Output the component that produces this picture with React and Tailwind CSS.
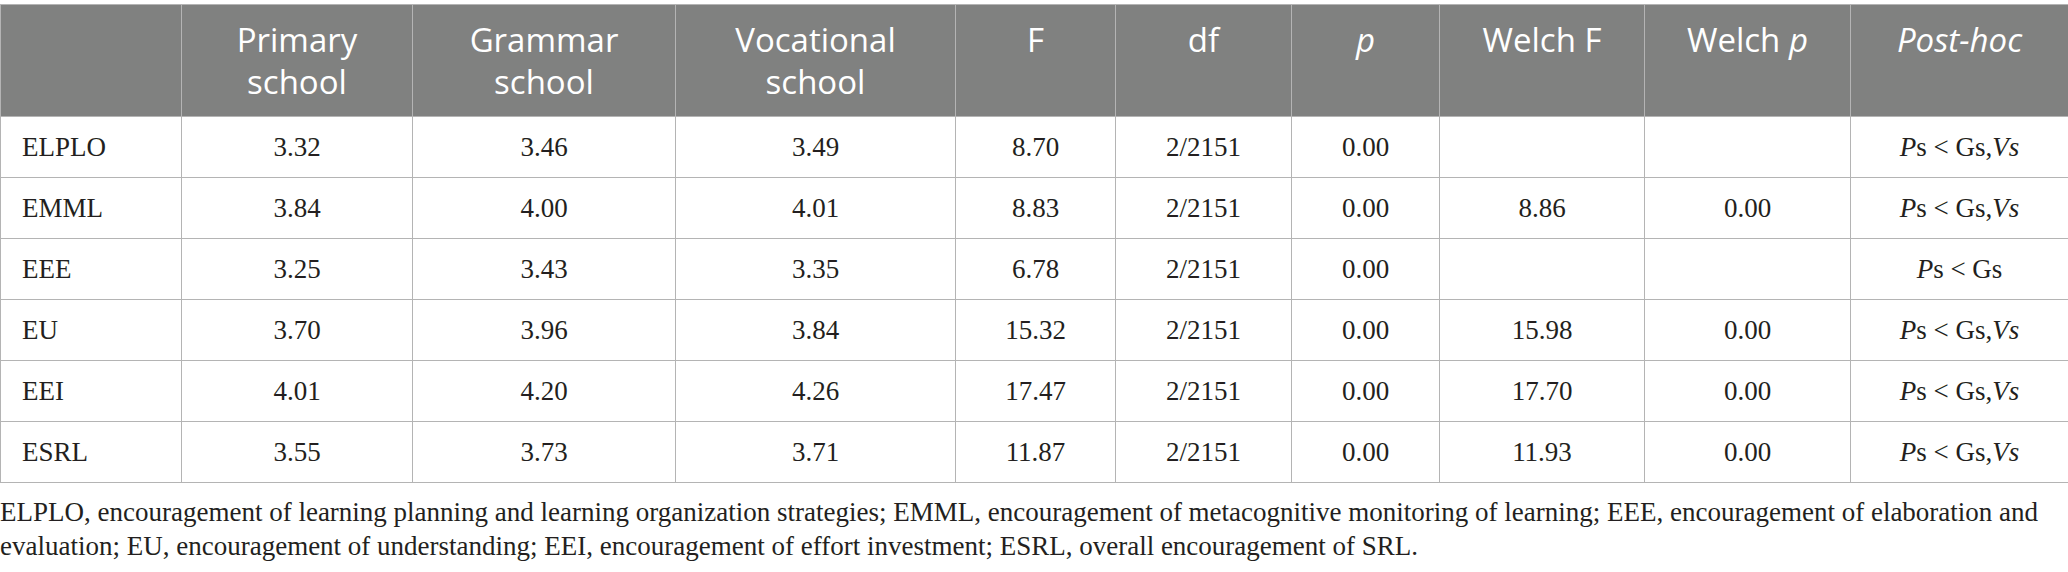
import React from 'react';

const rows = [
  ['ELPLO', '3.32', '3.46', '3.49', '8.70', '2/2151', '0.00', '', '', 'full'],
  ['EMML', '3.84', '4.00', '4.01', '8.83', '2/2151', '0.00', '8.86', '0.00', 'full'],
  ['EEE', '3.25', '3.43', '3.35', '6.78', '2/2151', '0.00', '', '', 'gs'],
  ['EU', '3.70', '3.96', '3.84', '15.32', '2/2151', '0.00', '15.98', '0.00', 'full'],
  ['EEI', '4.01', '4.20', '4.26', '17.47', '2/2151', '0.00', '17.70', '0.00', 'full'],
  ['ESRL', '3.55', '3.73', '3.71', '11.87', '2/2151', '0.00', '11.93', '0.00', 'full'],
];

const PostHoc = ({ kind }) =>
  kind === 'gs' ? (
    <span>
      <i>P</i>s &lt; Gs
    </span>
  ) : (
    <span>
      <i>P</i>s &lt; Gs,<i>Vs</i>
    </span>
  );

const th = 'border border-[#b4b4b4] align-top pt-[14px] text-center font-normal';
const td = 'border border-[#b4b4b4] text-center';

const App = () => {
  return (
    <div className="bg-white w-[2068px] h-[572px] pt-[4px] text-[#231f20]">
      <table className="w-[2068px] table-fixed border-collapse">
        <colgroup>
          <col className="w-[181px]" />
          <col className="w-[231px]" />
          <col className="w-[263px]" />
          <col className="w-[280px]" />
          <col className="w-[160px]" />
          <col className="w-[176px]" />
          <col className="w-[148px]" />
          <col className="w-[205px]" />
          <col className="w-[206px]" />
          <col className="w-[218px]" />
        </colgroup>
        <thead>
          <tr className="h-[112px] bg-[#808180] text-white text-[33px] leading-[42px] font-['Open_Sans',sans-serif]">
            <th className={th}></th>
            <th className={th}>Primary<br />school</th>
            <th className={th}>Grammar<br />school</th>
            <th className={th}>Vocational<br />school</th>
            <th className={th}>F</th>
            <th className={th}>df</th>
            <th className={th}><i>p</i></th>
            <th className={th}>Welch F</th>
            <th className={th}>Welch <i>p</i></th>
            <th className={th}><i>Post-hoc</i></th>
          </tr>
        </thead>
        <tbody className="font-['Liberation_Serif',serif] text-[27px]">
          {rows.map(r => (
            <tr key={r[0]} className="h-[61px]">
              <td className="border border-[#b4b4b4] text-left pl-[21px]">{r[0]}</td>
              {r.slice(1, 9).map((v, i) => (
                <td key={i} className={td}>{v}</td>
              ))}
              <td className={td}><PostHoc kind={r[9]} /></td>
            </tr>
          ))}
        </tbody>
      </table>
      <p className="mt-[12px] font-['Liberation_Serif',serif] text-[27px] leading-[34px]">
        ELPLO, encouragement of learning planning and learning organization strategies; EMML, encouragement of metacognitive monitoring of learning; EEE, encouragement of elaboration and
        <br />
        evaluation; EU, encouragement of understanding; EEI, encouragement of effort investment; ESRL, overall encouragement of SRL.
      </p>
    </div>
  );
};

export default App;
